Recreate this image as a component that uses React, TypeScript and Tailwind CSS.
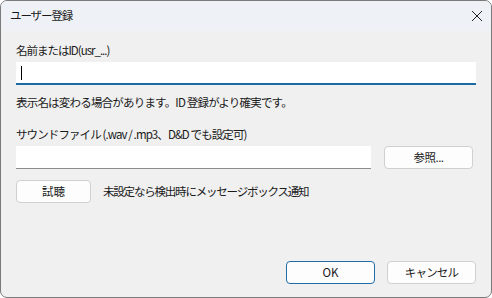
import React from "react";

const font = { fontFamily: '"Noto Sans CJK JP", "Noto Sans", sans-serif' };

export default function App() {
  return (
    <div className="w-[492px] h-[298px] bg-white" style={font}>
      <div className="w-[492px] h-[298px] rounded-[7px] border border-[#7a7a7a] bg-[#f0f0f0] overflow-hidden flex flex-col text-[11.5px] text-[#1a1a1a]">
        <div className="h-[30px] shrink-0 bg-[#eef2f7] flex items-center justify-between pl-[9px] pr-[0px]">
          <span className="text-[11.5px] leading-none tracking-[-1.1px]">ユーザー登録</span>
          <svg width="30" height="24" viewBox="0 0 30 24" className="mr-[-1px]">
            <path d="M10 7 L20 17 M20 7 L10 17" stroke="#222" strokeWidth="1" fill="none" />
          </svg>
        </div>
        <div className="flex-1 flex flex-col pl-[15px] pr-[14px] pt-[11px]">
          <div className="leading-[16px] h-[16px] tracking-[-1px]">名前またはID(usr_...)</div>
          <div className="mt-[4px] h-[23px] bg-white border-b-2 border-[#1c6aa3] mr-[1px] flex items-center pl-[5px]">
            <div className="w-px h-[14px] bg-black" />
          </div>
          <div className="mt-[9px] leading-[16px] h-[16px] tracking-[-0.8px]">表示名は変わる場合があります。ID 登録がより確実です。</div>
          <div className="mt-[16px] leading-[16px] h-[16px] tracking-[-0.9px]">サウンドファイル (.wav / .mp3、D&amp;D でも設定可)</div>
          <div className="mt-[4px] flex items-center">
            <div className="w-[355px] h-[23px] bg-white border-b border-[#8c8c8c]" />
            <button className="ml-[13px] w-[89px] h-[23px] rounded-[4px] border border-[#d0d0d0] bg-[#fdfdfd] text-[11.5px] leading-none tracking-[-0.5px]">参照...</button>
          </div>
          <div className="mt-[11px] flex items-center">
            <button className="w-[75px] h-[23px] rounded-[4px] border border-[#d0d0d0] bg-[#fdfdfd] text-[11.5px] leading-none">試聴</button>
            <span className="ml-[12px] tracking-[-1.2px]">未設定なら検出時にメッセージボックス通知</span>
          </div>
          <div className="mt-auto mb-[13px] flex justify-end gap-[12px] pr-[1px]">
            <button className="w-[89px] h-[23px] rounded-[4px] border border-[#1f6ca6] bg-[#fdfdfd] text-[11.5px] leading-none">OK</button>
            <button className="w-[89px] h-[23px] rounded-[4px] border border-[#d0d0d0] bg-[#fdfdfd] text-[11.5px] leading-none tracking-[-0.8px]">キャンセル</button>
          </div>
        </div>
      </div>
    </div>
  );
}
